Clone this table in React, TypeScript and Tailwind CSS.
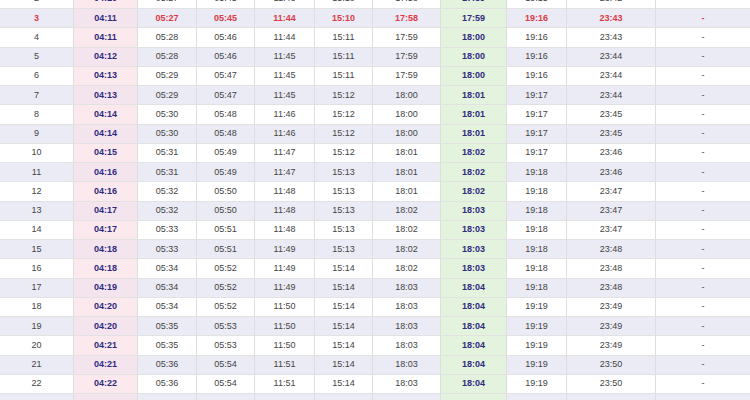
import React from "react";

const rows: [number, string[]][] = [
  [2, ["04:10", "05:27", "05:45", "11:43", "15:10", "17:58", "17:59", "19:15", "23:42"]],
  [3, ["04:11", "05:27", "05:45", "11:44", "15:10", "17:58", "17:59", "19:16", "23:43"]],
  [4, ["04:11", "05:28", "05:46", "11:44", "15:11", "17:59", "18:00", "19:16", "23:43"]],
  [5, ["04:12", "05:28", "05:46", "11:45", "15:11", "17:59", "18:00", "19:16", "23:44"]],
  [6, ["04:13", "05:29", "05:47", "11:45", "15:11", "17:59", "18:00", "19:16", "23:44"]],
  [7, ["04:13", "05:29", "05:47", "11:45", "15:12", "18:00", "18:01", "19:17", "23:44"]],
  [8, ["04:14", "05:30", "05:48", "11:46", "15:12", "18:00", "18:01", "19:17", "23:45"]],
  [9, ["04:14", "05:30", "05:48", "11:46", "15:12", "18:00", "18:01", "19:17", "23:45"]],
  [10, ["04:15", "05:31", "05:49", "11:47", "15:12", "18:01", "18:02", "19:17", "23:46"]],
  [11, ["04:16", "05:31", "05:49", "11:47", "15:13", "18:01", "18:02", "19:18", "23:46"]],
  [12, ["04:16", "05:32", "05:50", "11:48", "15:13", "18:01", "18:02", "19:18", "23:47"]],
  [13, ["04:17", "05:32", "05:50", "11:48", "15:13", "18:02", "18:03", "19:18", "23:47"]],
  [14, ["04:17", "05:33", "05:51", "11:48", "15:13", "18:02", "18:03", "19:18", "23:47"]],
  [15, ["04:18", "05:33", "05:51", "11:49", "15:13", "18:02", "18:03", "19:18", "23:48"]],
  [16, ["04:18", "05:34", "05:52", "11:49", "15:14", "18:02", "18:03", "19:18", "23:48"]],
  [17, ["04:19", "05:34", "05:52", "11:49", "15:14", "18:03", "18:04", "19:18", "23:48"]],
  [18, ["04:20", "05:34", "05:52", "11:50", "15:14", "18:03", "18:04", "19:19", "23:49"]],
  [19, ["04:20", "05:35", "05:53", "11:50", "15:14", "18:03", "18:04", "19:19", "23:49"]],
  [20, ["04:21", "05:35", "05:53", "11:50", "15:14", "18:03", "18:04", "19:19", "23:49"]],
  [21, ["04:21", "05:36", "05:54", "11:51", "15:14", "18:03", "18:04", "19:19", "23:50"]],
  [22, ["04:22", "05:36", "05:54", "11:51", "15:14", "18:03", "18:04", "19:19", "23:50"]],
  [23, ["04:23", "05:37", "05:55", "11:51", "15:15", "18:04", "18:05", "19:20", "23:51"]],
];

function Row({ day, vals }: { day: number; vals: string[] }) {
  const shaded = day % 2 === 1;
  const today = day === 3;
  const base = today ? "text-[#dd3a44] font-bold" : "text-[#444444]";
  const blue = "text-[#2f2a80] font-bold";
  const cell = "flex items-center justify-center border-r border-[#dedede]";
  return (
    <div
      className={`grid grid-cols-[74px_64px_59px_58px_60px_58px_68px_66px_60px_89px_94px] h-[19.25px] border-b border-[#e2e2e2] ${
        shaded ? "bg-[#ebebf5]" : "bg-white"
      }`}
    >
      <div className={`${cell} ${base}`}>{day}</div>
      <div className={`${cell} ${blue} ${shaded ? "bg-[#f3e4ee]" : "bg-[#fbe9ed]"}`}>{vals[0]}</div>
      <div className={`${cell} ${base}`}>{vals[1]}</div>
      <div className={`${cell} ${base}`}>{vals[2]}</div>
      <div className={`${cell} ${base}`}>{vals[3]}</div>
      <div className={`${cell} ${base}`}>{vals[4]}</div>
      <div className={`${cell} ${base}`}>{vals[5]}</div>
      <div className={`${cell} ${blue} bg-[#e3f3dd]`}>{vals[6]}</div>
      <div className={`${cell} ${base}`}>{vals[7]}</div>
      <div className={`${cell} ${base}`}>{vals[8]}</div>
      <div className={`flex items-center justify-center ${base}`}>-</div>
    </div>
  );
}

export default function App() {
  return (
    <div className="w-[750px] h-[400px] overflow-hidden bg-white">
      <div
        className="mt-[-10.25px] text-[9px] leading-none"
        style={{ fontFamily: '"Liberation Sans", Arial, sans-serif' }}
      >
        {rows.map(([d, v]) => (
          <Row key={d} day={d} vals={v} />
        ))}
      </div>
    </div>
  );
}
